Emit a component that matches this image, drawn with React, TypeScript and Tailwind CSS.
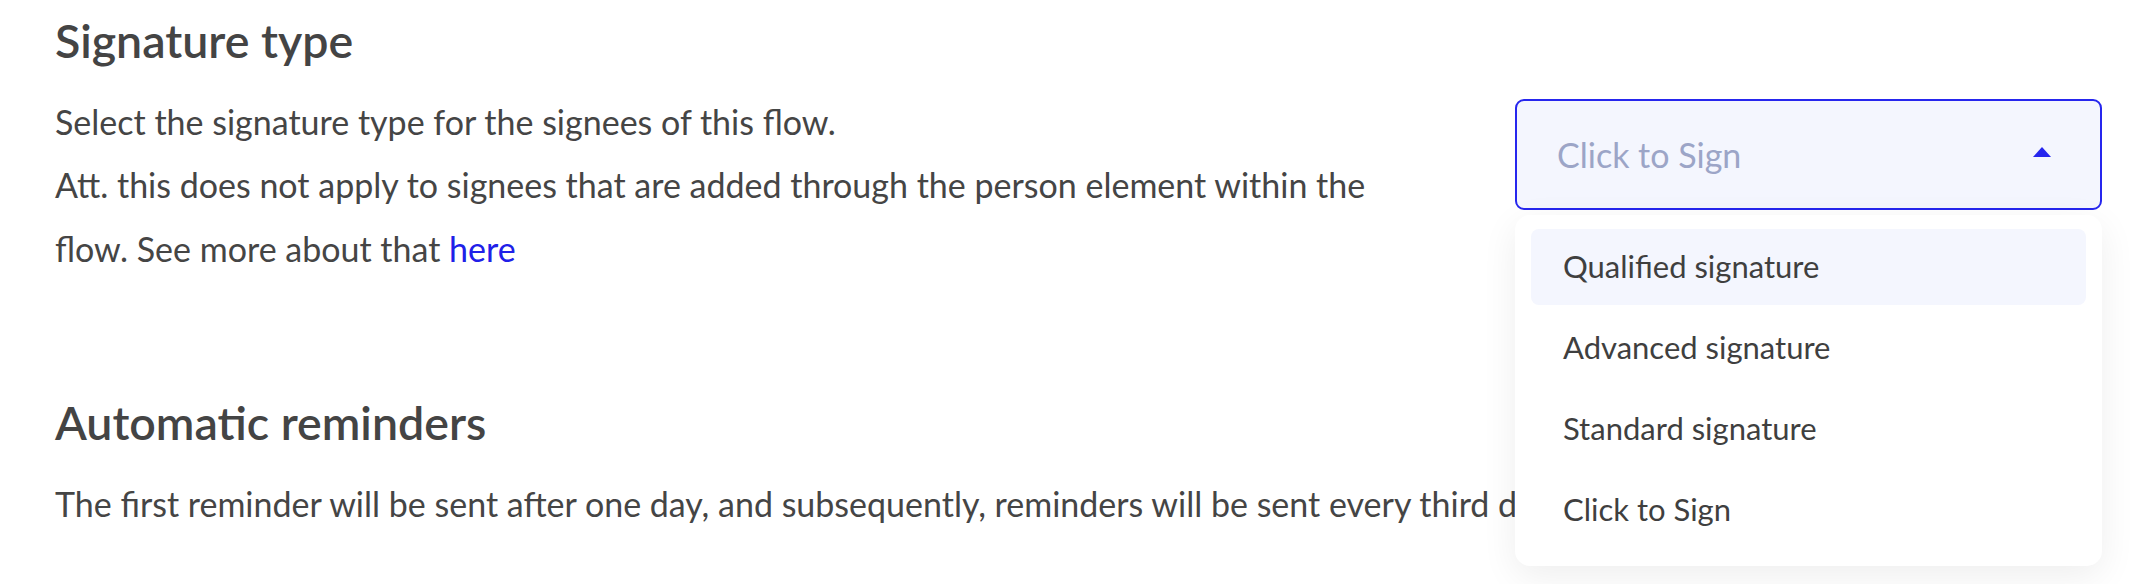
import { useState } from "react";

const OPTIONS = ["Qualified signature", "Advanced signature", "Standard signature", "Click to Sign"];

function SignatureSelect() {
  const [open] = useState(true);
  const [active] = useState(0);

  return (
    <div className="relative mt-[87px] w-[587px] shrink-0 self-start">
      <button
        type="button"
        className="flex h-[111px] w-full items-center justify-between rounded-[9px] border-2 border-[#2626ee] bg-[#f4f6fe] pl-[40px] pr-[49px] text-left"
      >
        <span className="mt-[2px] text-[34px] leading-[1.2] text-[#9ca5c7]">Click to Sign</span>
        <svg width="18" height="10" viewBox="0 0 18 10" className="-mt-[5px]">
          <polygon points="0,10 9,0 18,10" fill="#2626ee" />
        </svg>
      </button>

      {open && (
        <ul className="absolute left-0 right-0 top-full z-10 mt-[5px] flex flex-col gap-[5px] rounded-[15px] bg-white px-4 pt-[14px] pb-[18px] shadow-[0_10px_36px_rgba(0,0,0,0.07)]">
          {OPTIONS.map((opt, i) => (
            <li
              key={opt}
              className={
                "flex h-[76px] items-center rounded-[8px] px-8 text-[31px] leading-[1.2] text-[#3f3f3f] " +
                (i === active ? "bg-[#f4f6fe]" : "")
              }
            >
              {opt}
            </li>
          ))}
        </ul>
      )}
    </div>
  );
}

export default function App() {
  return (
    <div className="min-h-screen bg-white pl-[55px] pr-[38px] pt-[12px] font-['Lato',sans-serif] text-[#454545]">
      {/* signature type */}
      <section className="flex items-start justify-between">
        <div>
          <h2 className="text-[46.5px] font-semibold leading-[57.6px] text-[#444]">Signature type</h2>
          <div className="mt-[20px] w-[1345px] text-[34px] leading-[63.5px]">
            <p>Select the signature type for the signees of this flow.</p>
            <p>
              Att. this does not apply to signees that are added through the person element within the flow. See more
              about that{" "}
              <a href="#" className="text-[#2020e8]">
                here
              </a>
            </p>
          </div>
        </div>
        <SignatureSelect />
      </section>

      {/* reminders */}
      <section className="mt-[114px]">
        <h2 className="text-[46.5px] font-semibold leading-[57.6px] text-[#444]">Automatic reminders</h2>
        <p className="mt-[20px] whitespace-nowrap text-[34px] leading-[63.5px]">
          The first reminder will be sent after one day, and subsequently, reminders will be sent every third day until
          the document has been signed.
        </p>
      </section>
    </div>
  );
}
